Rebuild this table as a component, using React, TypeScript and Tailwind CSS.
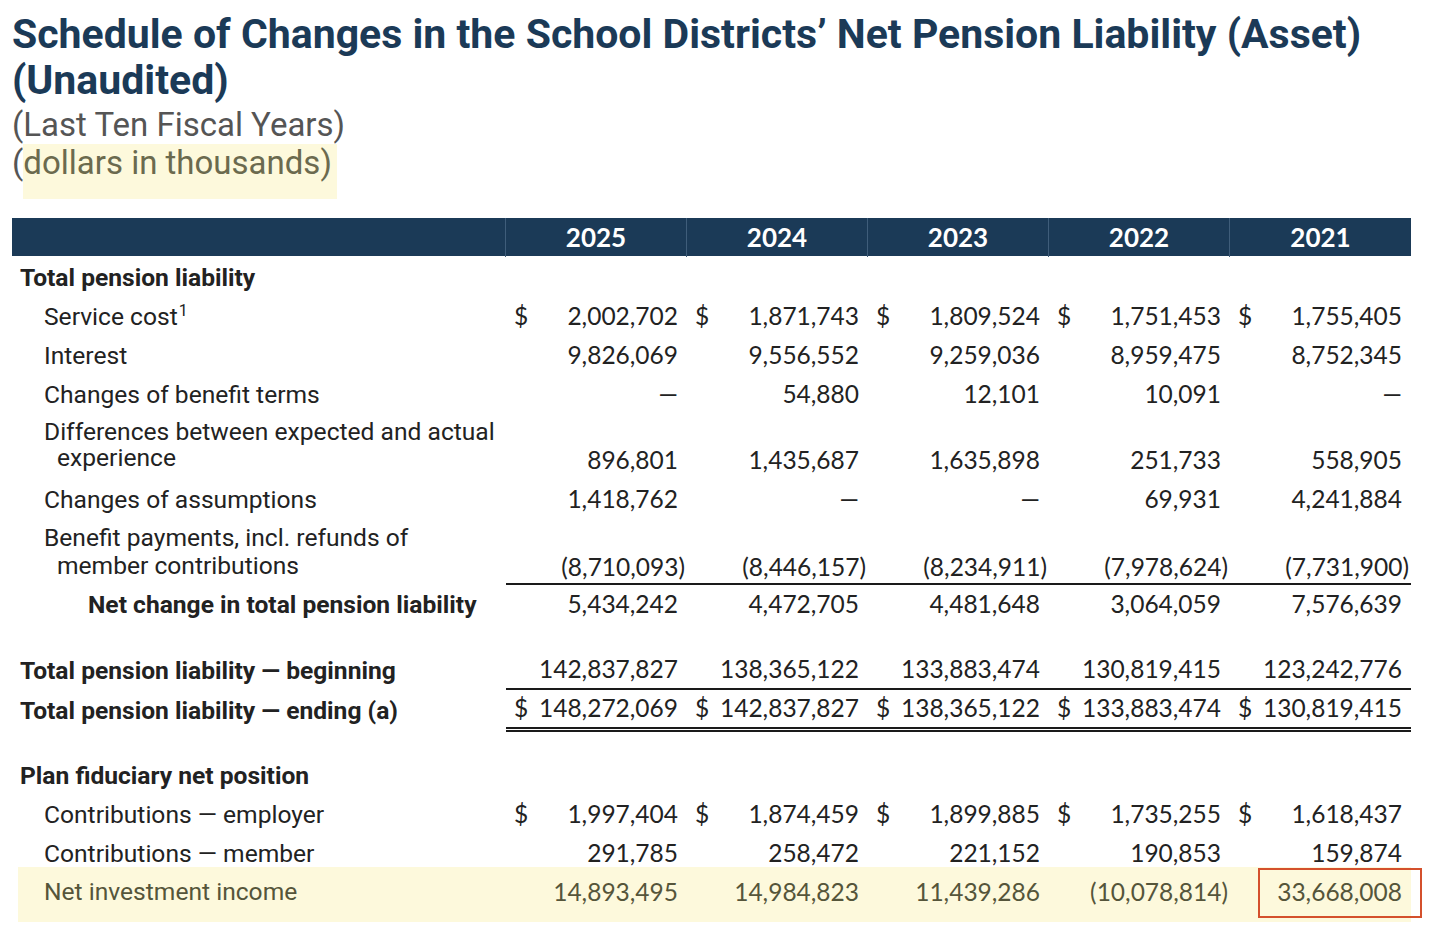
import React from "react";

type Row = {
  label: string[];
  values: string[];
  dollar?: boolean;
  kind?: "section" | "item" | "total";
  tall?: "diff" | "benefit";
  lineBelow?: "single" | "double";
  gapBefore?: number;
  sup?: string;
};

const years = ["2025", "2024", "2023", "2022", "2021"];

const rows: Row[] = [
  { label: ["Total pension liability"], values: [], kind: "section" },
  {
    label: ["Service cost"],
    sup: "1",
    values: ["2,002,702", "1,871,743", "1,809,524", "1,751,453", "1,755,405"],
    dollar: true,
  },
  { label: ["Interest"], values: ["9,826,069", "9,556,552", "9,259,036", "8,959,475", "8,752,345"] },
  { label: ["Changes of benefit terms"], values: ["—", "54,880", "12,101", "10,091", "—"] },
  {
    label: ["Differences between expected and actual", "experience"],
    values: ["896,801", "1,435,687", "1,635,898", "251,733", "558,905"],
    tall: "diff",
  },
  { label: ["Changes of assumptions"], values: ["1,418,762", "—", "—", "69,931", "4,241,884"] },
  {
    label: ["Benefit payments, incl. refunds of", "member contributions"],
    values: ["(8,710,093)", "(8,446,157)", "(8,234,911)", "(7,978,624)", "(7,731,900)"],
    tall: "benefit",
    lineBelow: "single",
  },
  {
    label: ["Net change in total pension liability"],
    values: ["5,434,242", "4,472,705", "4,481,648", "3,064,059", "7,576,639"],
    kind: "total",
  },
  {
    label: ["Total pension liability — beginning"],
    values: ["142,837,827", "138,365,122", "133,883,474", "130,819,415", "123,242,776"],
    kind: "section",
    lineBelow: "single",
    gapBefore: 27,
  },
  {
    label: ["Total pension liability — ending (a)"],
    values: ["148,272,069", "142,837,827", "138,365,122", "133,883,474", "130,819,415"],
    kind: "section",
    dollar: true,
    lineBelow: "double",
  },
  { label: ["Plan fiduciary net position"], values: [], kind: "section", gapBefore: 27 },
  {
    label: ["Contributions — employer"],
    values: ["1,997,404", "1,874,459", "1,899,885", "1,735,255", "1,618,437"],
    dollar: true,
  },
  { label: ["Contributions — member"], values: ["291,785", "258,472", "221,152", "190,853", "159,874"] },
];

function Amount({ value }: { value: string }) {
  const negative = value.startsWith("(");
  return <span className={negative ? "mr-[-7px]" : ""}>{value}</span>;
}

function TableRow({ row }: { row: Row }) {
  const labelIndent =
    row.kind === "section" ? "pl-[8px] font-bold" : row.kind === "total" ? "pl-[76px] font-bold" : "pl-[32px]";
  const border =
    row.lineBelow === "single"
      ? "border-b-2 border-[#1a1a1a]"
      : row.lineBelow === "double"
        ? "border-b-[5px] border-double border-[#1a1a1a]"
        : "";

  if (row.tall) {
    const isDiff = row.tall === "diff";
    return (
      <div className="grid h-[66px] grid-cols-[494px_repeat(5,181px)]">
        <div
          className={`self-end font-['Roboto'] text-[24.6px] text-[#222] ${labelIndent} ${isDiff ? "pb-[9px] leading-[26px]" : "pb-[5px] leading-[28px]"}`}
        >
          {row.label.map((line, i) => (
            <div key={line} className={i > 0 ? "pl-[13px]" : ""}>
              {line}
            </div>
          ))}
        </div>
        {row.values.map((v, i) => (
          <div
            key={i}
            className={`flex h-full items-end justify-between pl-[8px] pr-[9px] font-['Lato'] text-[24.5px] leading-[25px] text-[#222] ${isDiff ? "pb-[8px]" : "pb-[4px]"} ${border}`}
          >
            <span>{row.dollar ? "$" : ""}</span>
            <Amount value={v} />
          </div>
        ))}
      </div>
    );
  }

  return (
    <div
      className="grid h-[39px] grid-cols-[494px_repeat(5,181px)] items-center"
      style={row.gapBefore ? { marginTop: row.gapBefore } : undefined}
    >
      <div className={`font-['Roboto'] text-[24.6px] leading-[25px] text-[#222] ${labelIndent}`}>
        {row.label[0]}
        {row.sup ? <span className="relative top-[-9px] ml-[1px] text-[16px] leading-none">{row.sup}</span> : null}
      </div>
      {row.values.map((v, i) => (
        <div
          key={i}
          className={`flex h-full items-center justify-between pl-[8px] pr-[9px] font-['Lato'] text-[24.5px] text-[#222] ${border}`}
        >
          <span>{row.dollar ? "$" : ""}</span>
          <Amount value={v} />
        </div>
      ))}
    </div>
  );
}

export default function App() {
  return (
    <div className="h-[936px] w-[1430px] overflow-hidden bg-white px-[12px] pt-[11px]">
      <h1 className="font-['Roboto'] text-[41px] font-bold leading-[46px] text-[#1b3a57]">
        Schedule of Changes in the School Districts’ Net Pension Liability (Asset)
        <br />
        (Unaudited)
      </h1>
      <p className="mt-[3px] font-['Roboto'] text-[33px] leading-[38px] text-[#555]">(Last Ten Fiscal Years)</p>
      <p className="font-['Roboto'] text-[33px] leading-[38px] text-[#555]">
        (
        <span className="inline-block bg-[#fdf9dc] pr-[5px] pb-[17px] leading-[38px] text-[#6b6a4e]">
          dollars in thousands)
        </span>
      </p>

      <div className="mt-[19px] w-[1399px]">
        <div className="grid h-[38px] grid-cols-[494px_repeat(5,181px)] bg-[#1b3a57]">
          <div className="border-r border-[#3f5d7a]" />
          {years.map((y, i) => (
            <div
              key={y}
              className={`flex items-center justify-center font-['Lato'] text-[26px] font-bold text-white ${i < 4 ? "border-r border-[#3f5d7a]" : ""}`}
            >
              {y}
            </div>
          ))}
        </div>

        <div className="pt-[2px]">
          {rows.map((r) => (
            <TableRow key={r.label[0]} row={r} />
          ))}
          <div className="ml-[6px] mt-[-6px] grid h-[55px] grid-cols-[488px_repeat(5,181px)] bg-[#fdf9dc] text-[#55553a]">
            <div className="flex h-full items-center pb-[5px] pl-[26px] font-['Roboto'] text-[24.6px]">
              Net investment income
            </div>
            {["14,893,495", "14,984,823", "11,439,286", "(10,078,814)", "33,668,008"].map((v, i) => (
              <div key={v} className="relative flex h-full items-center justify-end pb-[5px] pr-[9px] font-['Lato'] text-[24.5px]">
                <Amount value={v} />
                {i === 4 ? (
                  <span className="absolute bottom-[4px] left-[28px] right-[-11px] top-[1px] border-2 border-[#d4502c]" />
                ) : null}
              </div>
            ))}
          </div>
        </div>
      </div>
    </div>
  );
}
